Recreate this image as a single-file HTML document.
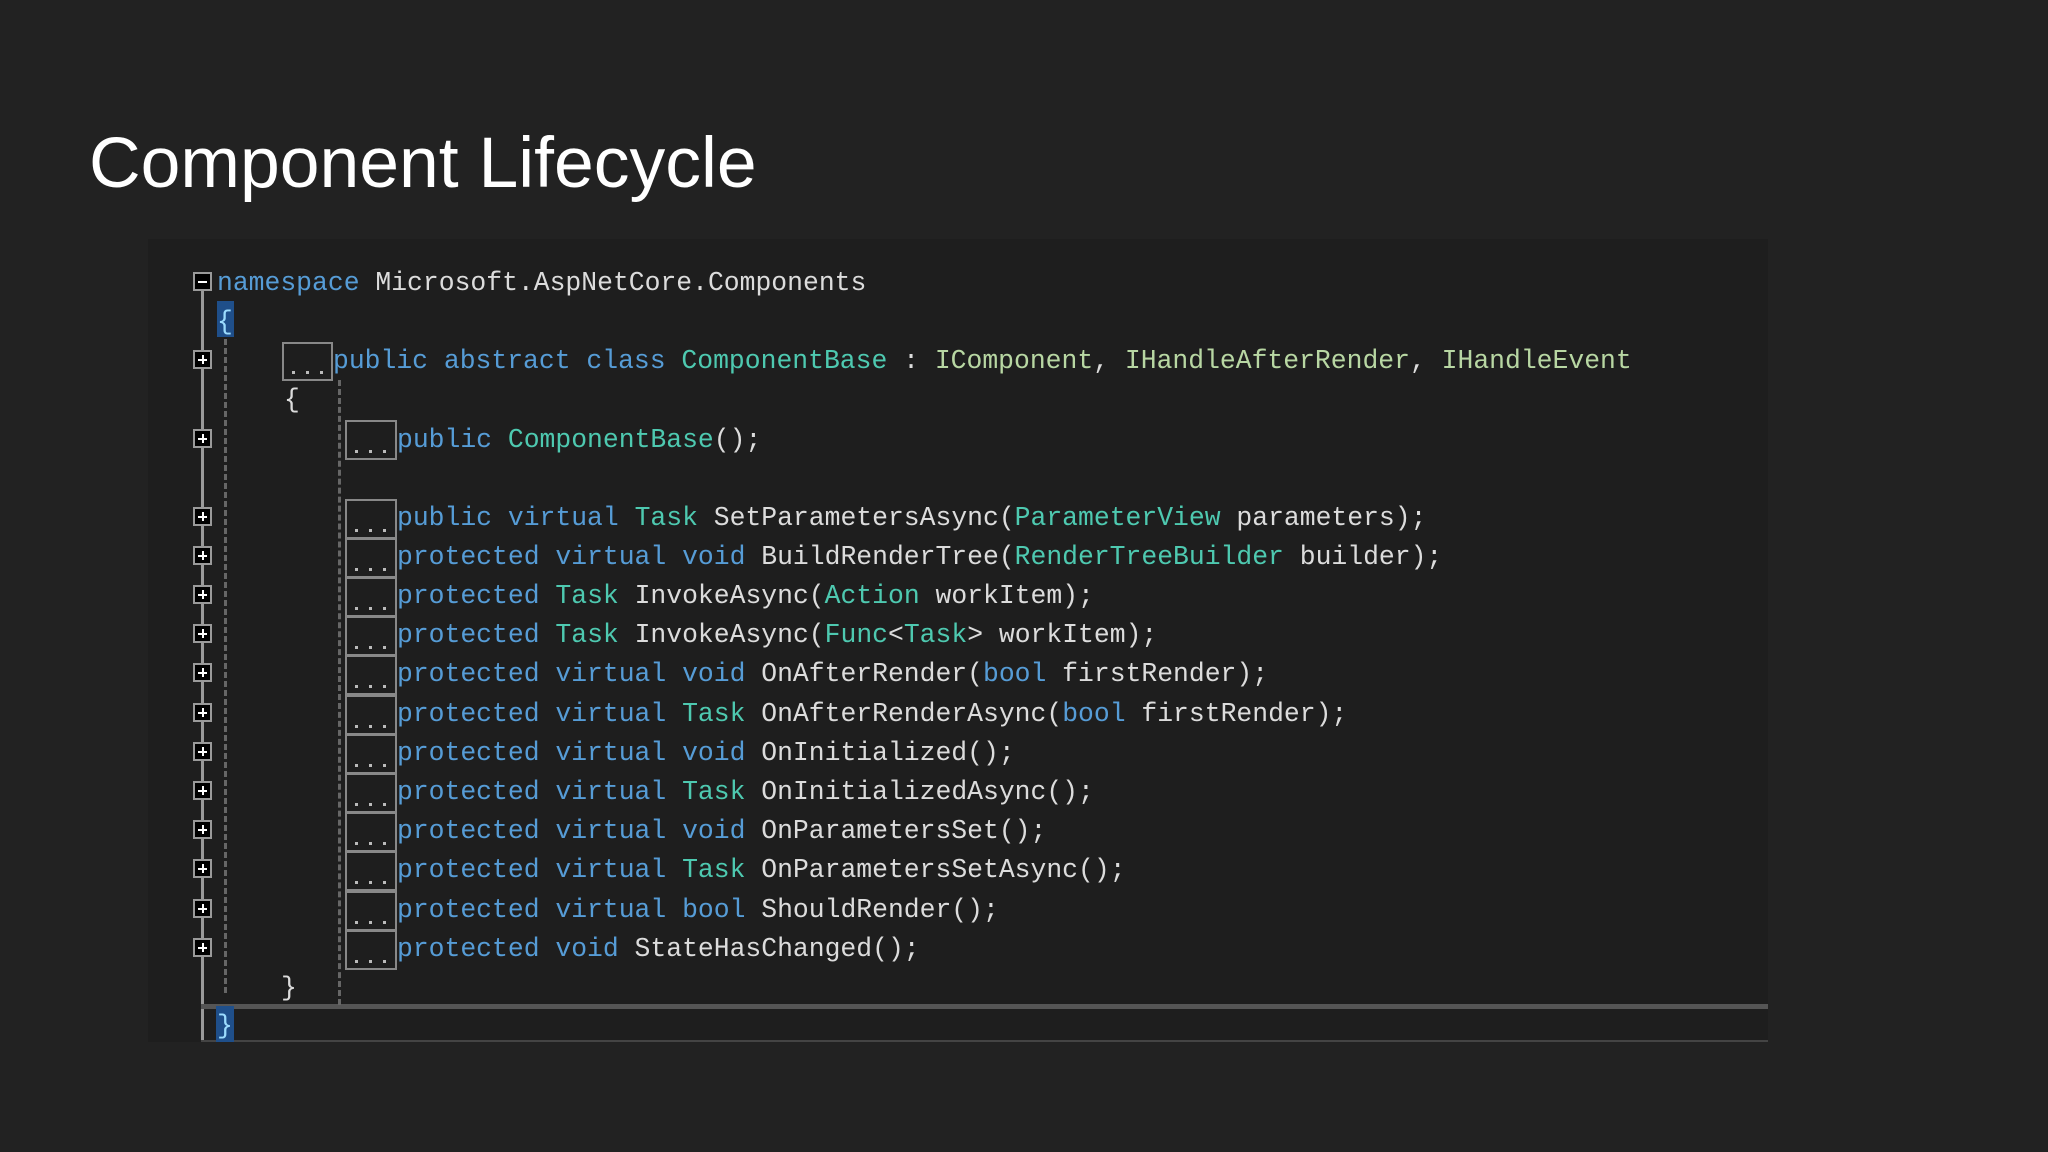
<!DOCTYPE html>
<html><head><meta charset="utf-8"><style>
body{margin:0;width:2048px;height:1152px;background:#222;overflow:hidden;position:relative;font-family:"Liberation Sans",sans-serif}
.t{position:absolute;left:89px;top:118px;font-size:71.5px;color:#fff;line-height:90px;white-space:nowrap}
.panel{position:absolute;left:148px;top:239px;width:1620px;height:803px;background:#1e1e1e}
.l{position:absolute;height:39px;line-height:39px;font-family:"Liberation Mono",monospace;font-size:26.4px;color:#dcdcdc;white-space:pre;margin-top:3px}
.k{color:#569cd6}.ty{color:#4ec9b0}.i{color:#b8d7a3}
.f{position:absolute;left:193px;width:15px;height:15px;border:2px solid #9a9a9a;background:#000}
.f:before{content:"";position:absolute;left:3px;right:3px;top:6.5px;height:2px;background:#fff}
.f.p:after{content:"";position:absolute;top:3px;bottom:3px;left:6.5px;width:2px;background:#fff}
.b{position:absolute;border:2px solid #888;box-sizing:border-box}
.b:after{content:"";position:absolute;bottom:5px;left:8px;width:3px;height:3px;background:#bbb;box-shadow:14px 0 0 #bbb,28px 0 0 #bbb}
.d{position:absolute;width:0;border-left:3px dashed #666}
.hl{position:absolute;background:#1f4f8a}
</style></head><body>
<div class="t">Component Lifecycle</div>
<div class="panel"></div>
<div style="position:absolute;left:201px;top:290px;width:3px;height:751px;background:#9a9a9a"></div>
<div style="position:absolute;left:201px;top:1004px;width:1567px;height:5px;background:#555"></div>
<div style="position:absolute;left:201px;top:1040px;width:1567px;height:2px;background:#444"></div>
<div class="d" style="left:224px;top:303px;height:690px"></div>
<div class="d" style="left:338px;top:380px;height:625px"></div>
<div class="hl" style="left:217px;top:301px;width:17px;height:36px"></div>
<div class="hl" style="left:216px;top:1006px;width:18px;height:36px"></div>

<div class="f" style="top:272px"></div>
<div class="l" style="left:217px;top:261px"><span class="k">namespace</span> Microsoft.AspNetCore.Components</div>
<div class="l" style="left:217px;top:300px;color:#9cdcfe">{</div>

<div class="f p" style="top:350px"></div>
<div class="b" style="left:282px;top:342px;width:51px;height:39px"></div>
<div class="l" style="left:333px;top:339px"><span class="k">public abstract class</span> <span class="ty">ComponentBase</span> : <span class="i">IComponent</span>, <span class="i">IHandleAfterRender</span>, <span class="i">IHandleEvent</span></div>
<div class="l" style="left:284px;top:378px">{</div>

<div class="f p" style="top:429px"></div>
<div class="b" style="left:345px;top:420px;width:52px;height:40px"></div>
<div class="l" style="left:397px;top:418px"><span class="k">public</span> <span class="ty">ComponentBase</span>();</div>

<div class="f p" style="top:507px"></div><div class="b" style="left:345px;top:499px;width:52px;height:40px"></div>
<div class="l" style="left:397px;top:496px"><span class="k">public virtual</span> <span class="ty">Task</span> SetParametersAsync(<span class="ty">ParameterView</span> parameters);</div>
<div class="f p" style="top:546px"></div><div class="b" style="left:345px;top:538px;width:52px;height:40px"></div>
<div class="l" style="left:397px;top:535px"><span class="k">protected virtual void</span> BuildRenderTree(<span class="ty">RenderTreeBuilder</span> builder);</div>
<div class="f p" style="top:585px"></div><div class="b" style="left:345px;top:577px;width:52px;height:40px"></div>
<div class="l" style="left:397px;top:574px"><span class="k">protected</span> <span class="ty">Task</span> InvokeAsync(<span class="ty">Action</span> workItem);</div>
<div class="f p" style="top:624px"></div><div class="b" style="left:345px;top:616px;width:52px;height:40px"></div>
<div class="l" style="left:397px;top:613px"><span class="k">protected</span> <span class="ty">Task</span> InvokeAsync(<span class="ty">Func</span>&lt;<span class="ty">Task</span>&gt; workItem);</div>
<div class="f p" style="top:663px"></div><div class="b" style="left:345px;top:655px;width:52px;height:40px"></div>
<div class="l" style="left:397px;top:652px"><span class="k">protected virtual void</span> OnAfterRender(<span class="k">bool</span> firstRender);</div>
<div class="f p" style="top:703px"></div><div class="b" style="left:345px;top:695px;width:52px;height:40px"></div>
<div class="l" style="left:397px;top:692px"><span class="k">protected virtual</span> <span class="ty">Task</span> OnAfterRenderAsync(<span class="k">bool</span> firstRender);</div>
<div class="f p" style="top:742px"></div><div class="b" style="left:345px;top:734px;width:52px;height:40px"></div>
<div class="l" style="left:397px;top:731px"><span class="k">protected virtual void</span> OnInitialized();</div>
<div class="f p" style="top:781px"></div><div class="b" style="left:345px;top:773px;width:52px;height:40px"></div>
<div class="l" style="left:397px;top:770px"><span class="k">protected virtual</span> <span class="ty">Task</span> OnInitializedAsync();</div>
<div class="f p" style="top:820px"></div><div class="b" style="left:345px;top:812px;width:52px;height:40px"></div>
<div class="l" style="left:397px;top:809px"><span class="k">protected virtual void</span> OnParametersSet();</div>
<div class="f p" style="top:859px"></div><div class="b" style="left:345px;top:851px;width:52px;height:40px"></div>
<div class="l" style="left:397px;top:848px"><span class="k">protected virtual</span> <span class="ty">Task</span> OnParametersSetAsync();</div>
<div class="f p" style="top:899px"></div><div class="b" style="left:345px;top:891px;width:52px;height:40px"></div>
<div class="l" style="left:397px;top:888px"><span class="k">protected virtual bool</span> ShouldRender();</div>
<div class="f p" style="top:938px"></div><div class="b" style="left:345px;top:930px;width:52px;height:40px"></div>
<div class="l" style="left:397px;top:927px"><span class="k">protected void</span> StateHasChanged();</div>

<div class="l" style="left:281px;top:966px">}</div>
<div class="l" style="left:217px;top:1004px;color:#9cdcfe">}</div>
</body></html>
